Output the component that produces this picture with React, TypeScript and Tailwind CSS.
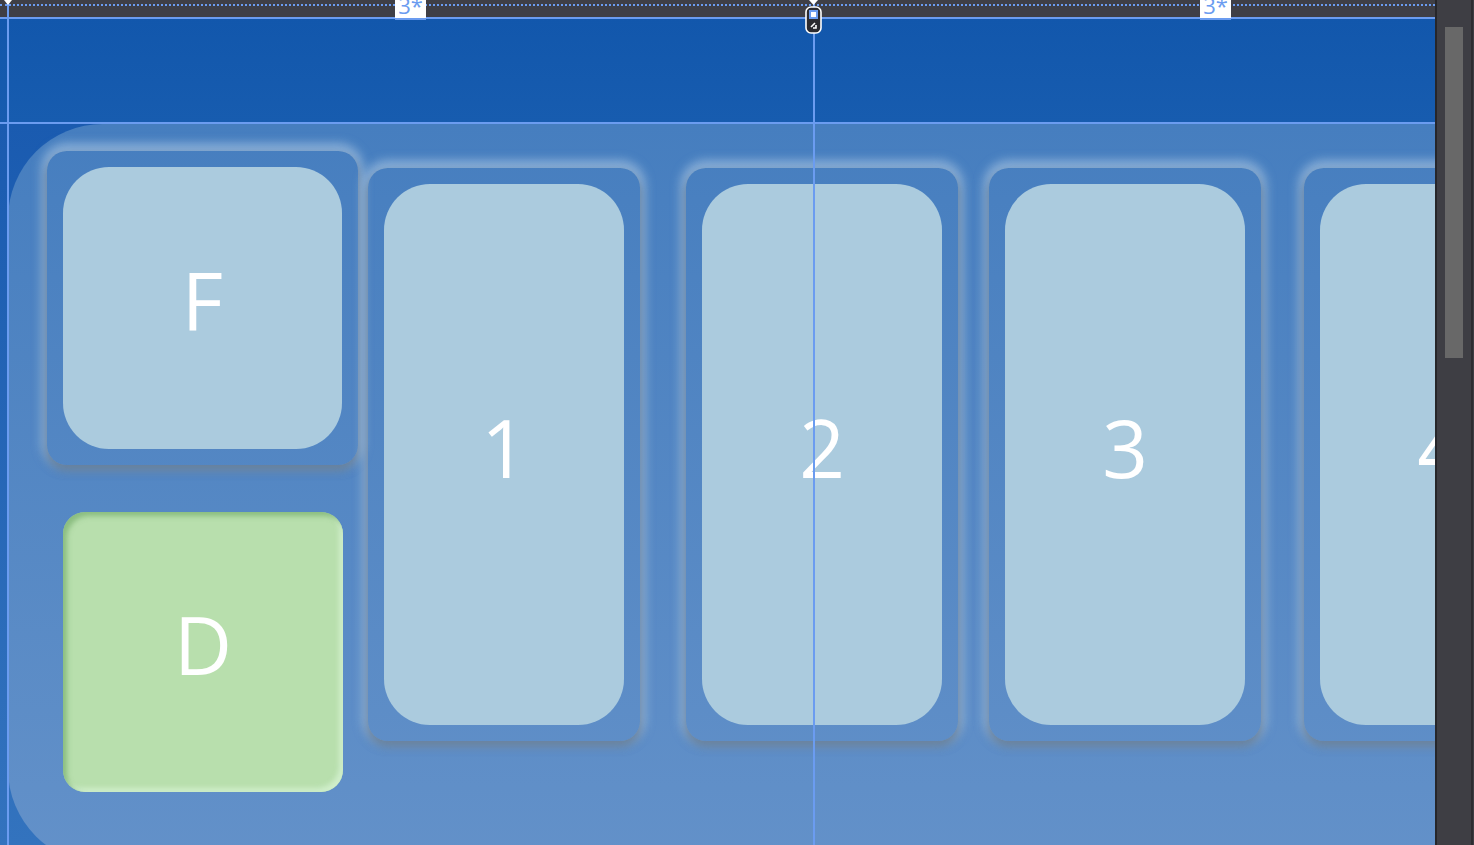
import type { ReactNode } from 'react'

const font = { fontFamily: '"Open Sans", "Noto Sans", sans-serif' }

function Tile({ label, tall, className }: { label: string; tall?: boolean; className?: string }) {
  return (
    <div
      className={`shrink-0 rounded-[20px] p-[16px] shadow-[0_5px_8px_1px_rgba(80,95,110,0.55),0_-2px_10px_6px_rgba(185,212,235,0.55)] ${
        tall ? 'w-[272px] h-[573px]' : 'w-[311px] h-[314px]'
      } ${className ?? ''}`}
    >
      <div className="flex h-full w-full items-center justify-center rounded-[46px] bg-[#abcbde]">
        <span className="pb-[16px] text-[80px] font-normal leading-none text-white" style={font}>
          {label}
        </span>
      </div>
    </div>
  )
}

function SizeTag({ children, left }: { children: ReactNode; left: string }) {
  return (
    <div
      className={`absolute top-0 ${left} flex h-[20px] w-[31px] items-end justify-center overflow-hidden border-b-2 border-[#6b9cf0] bg-white`}
    >
      <span className="text-[22px] leading-[26px] text-[#6b9cf0]" style={font}>
        {children}
      </span>
    </div>
  )
}

export default function App() {
  return (
    <div className="relative flex h-[845px] w-[1474px] overflow-hidden bg-[#3e3e44]">
      <div className="flex w-[1435px] flex-col">
        {/* designer ruler strip */}
        <div className="relative h-[17px] shrink-0 bg-[#3f3f46]">
          <div className="absolute left-0 right-0 top-[4px] border-t-2 border-dotted border-[#6b9cf0]" />
        </div>
        <div className="h-[2px] shrink-0 bg-[#6b9cf0]" />
        {/* header row */}
        <div className="h-[103px] shrink-0 bg-[linear-gradient(180deg,#1257ac_0%,#175caf_100%)]" />
        <div className="h-[2px] shrink-0 bg-[#6b9cf0]" />
        {/* content row */}
        <div className="min-h-0 flex-1 overflow-hidden bg-[linear-gradient(180deg,#1a5bb0_0%,#3373be_100%)] pl-[8px]">
          <div className="flex h-[740px] rounded-l-[95px] bg-[linear-gradient(180deg,#467ebf_0%,#6391c9_100%)] pl-[39px] pt-[27px]">
            <div className="flex w-[311px] shrink-0 flex-col">
              <Tile label="F" />
              <div className="ml-[16px] mt-[47px] flex h-[280px] w-[280px] items-center justify-center rounded-[22px] bg-[#b8dfad] shadow-[inset_4px_4px_5px_rgba(120,175,110,0.7),inset_-4px_-4px_5px_rgba(210,240,205,0.9)]">
                <span className="pb-[16px] text-[80px] font-normal leading-none text-white" style={font}>
                  D
                </span>
              </div>
            </div>
            <div className="flex items-start pt-[17px]">
              <Tile label="1" tall className="ml-[10px]" />
              <Tile label="2" tall className="ml-[46px]" />
              <Tile label="3" tall className="ml-[31px]" />
              <Tile label="4" tall className="ml-[43px]" />
            </div>
          </div>
        </div>
      </div>

      {/* scrollbar */}
      <div className="relative z-10 w-[39px] shrink-0 border-l-2 border-[#26262a] bg-[#3e3e44]">
        <div className="ml-[8px] mt-[27px] h-[331px] w-[18px] bg-[#686868]" />
        <div className="absolute bottom-0 right-[1px] top-0 w-[2px] bg-[#2d2d31]" />
      </div>

      {/* designer adorners */}
      <div className="absolute left-[7px] top-0 h-full w-[2px] bg-[#6b9cf0]" />
      <div className="absolute left-[813px] top-0 h-full w-[2px] bg-[#6b9cf0]" />
      <svg className="absolute left-[4px] top-0" width="8" height="5" viewBox="0 0 8 5">
        <path d="M0 0h8L4 5z" fill="#ffffff" />
      </svg>
      <svg className="absolute left-[805px] top-0" width="17" height="35" viewBox="0 0 17 35">
        <path d="M4 0h9L8.5 5z" fill="#ffffff" />
        <rect x="1" y="7" width="15" height="26" rx="5" fill="#2b2b30" stroke="#ffffff" strokeWidth="1.6" />
        <rect x="4" y="10" width="9" height="9" fill="#6b9cf0" />
        <rect x="6" y="12" width="5" height="5" fill="#ffffff" />
        <path d="M6 27l4-4M8 28h3v-3" stroke="#ffffff" strokeWidth="1.6" fill="none" />
      </svg>
      <SizeTag left="left-[395px]">3*</SizeTag>
      <SizeTag left="left-[1200px]">3*</SizeTag>
    </div>
  )
}
